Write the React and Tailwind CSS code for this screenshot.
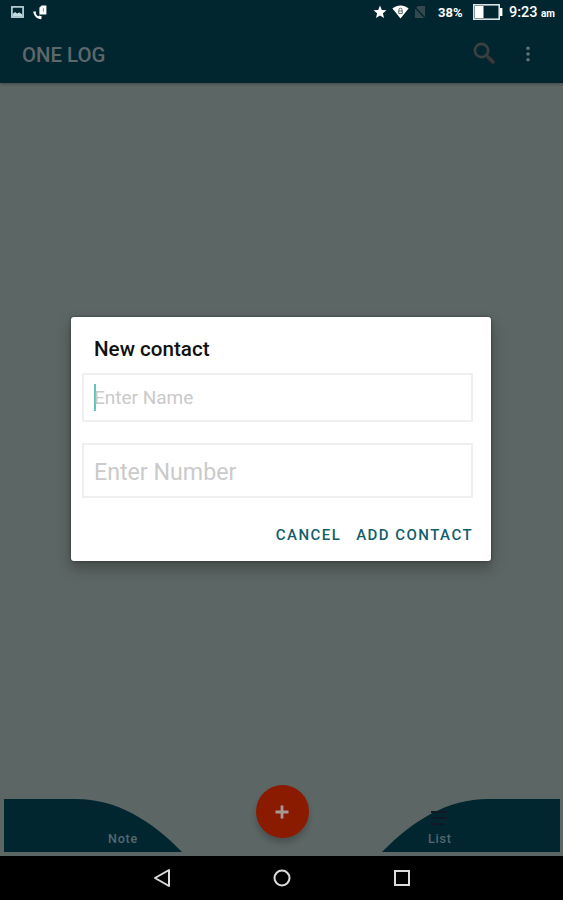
import React, { useState } from 'react';

function StatusBar() {
    return (
        <div className="flex h-6 items-center justify-between pl-[11px] pr-[7px] text-white">
            <div className="flex items-center gap-[9px]">
                <svg width="13" height="12" viewBox="0 0 13 12" fill="none" className="text-[#c3dce2]">
                    <rect x="0.9" y="0.9" width="11.2" height="10.2" stroke="currentColor" strokeWidth="1.6" />
                    <path d="M1.6 10.4V8l2.4-2 2 1.6L8.4 6.4l3 2v2z" fill="currentColor" />
                </svg>
                <svg width="15" height="15" viewBox="0 0 15 15" fill="none">
                    <path d="M8.6 0.5H13.4v9H6.4V2.8z" fill="currentColor" />
                    <path d="M10.4 3.2v3.6" stroke="#8aa2a8" strokeWidth="1.2" />
                    <path d="M0.2 6.4c0.6 4.4 3.8 7.6 8 7.8l0.6-2.6-2.3-1.2-1.4 0.8C3.9 10.4 3.4 9.6 2.8 8.2L3 6.6z" fill="currentColor" />
                </svg>
            </div>
            <div className="flex items-center">
                <svg width="14" height="14" viewBox="0 0 14 14" fill="currentColor">
                    <path d="M7 0.6l1.8 4.3 4.7 0.4-3.6 3 1.1 4.6L7 10.4l-4 2.5 1.1-4.6-3.6-3 4.7-0.4z" />
                </svg>
                <svg width="17" height="14" viewBox="0 0 17 14" className="ml-[5px]">
                    <path d="M0.4 3.6C5-0.4 12-0.4 16.6 3.6L8.5 13.6z" fill="currentColor" />
                    <path d="M6.9 6V4.8a1.6 1.6 0 0 1 3.2 0V6M6.8 6h3.4v2.6H6.8z" fill="none" stroke="#52686e" strokeWidth="1" />
                </svg>
                <svg width="12" height="14" viewBox="0 0 12 14" className="ml-[5px]">
                    <path d="M4 1h7v12H1V4z" fill="#33494f" />
                    <path d="M0.5 2l10.5 11" stroke="#02262f" strokeWidth="1.4" />
                </svg>
                <span className="ml-[12px] w-[25px] pt-[1px] text-[13px] font-bold leading-none">38%</span>
                <svg width="30" height="16" viewBox="0 0 30 16" fill="none" className="ml-[10px]">
                    <rect x="0.8" y="0.8" width="25.4" height="14.4" stroke="#dbe3e5" strokeWidth="1.6" />
                    <rect x="2" y="2" width="8.5" height="12" fill="currentColor" />
                    <rect x="27" y="4" width="2.4" height="8" fill="currentColor" />
                </svg>
                <span className="ml-[6px] w-[30px] whitespace-nowrap pt-[2px] text-[14.5px] font-medium leading-none">9:23</span>
                <span className="ml-[2px] mt-[4px] w-[15px] text-[10px] font-bold leading-none">am</span>
            </div>
        </div>
    );
}

function AppBar() {
    return (
        <div className="flex h-[59px] items-center justify-between pl-[22px] pr-[31px]">
            <h1 className="pt-[4px] text-[20.4px] font-medium leading-none text-[#5d686b]">ONE LOG</h1>
            <div className="flex items-center gap-[28px]">
                <svg width="23" height="23" viewBox="0 0 23 23" fill="none">
                    <circle cx="8.5" cy="8.5" r="6.6" stroke="#394142" strokeWidth="2.6" />
                    <path d="M13.2 13.2l2 2" stroke="#394142" strokeWidth="2" />
                    <path d="M15 15l5 5" stroke="#3d3739" strokeWidth="3.6" strokeLinecap="round" />
                </svg>
                <svg width="8" height="18" viewBox="0 0 8 18" fill="#617175">
                    <circle cx="4" cy="3.2" r="1.8" />
                    <circle cx="4" cy="9" r="1.8" />
                    <circle cx="4" cy="14.8" r="1.8" />
                </svg>
            </div>
        </div>
    );
}

function ContactDialog() {
    const [name, setName] = useState('');
    const [number, setNumber] = useState('');

    return (
        <div className="h-[244px] w-[420px] rounded-[3px] bg-white pl-[11px] pr-[18px] pt-[20px] shadow-[0_7px_14px_1px_rgba(0,0,0,0.25),0_0_3px_rgba(0,0,0,0.4)]">
            <h2 className="pl-[12px] text-[20.6px] font-medium leading-6 text-[#111]">New contact</h2>

            <div className="mt-[12px] flex h-[49px] items-center border-2 border-[#efefef] pl-[10px]">
                {/* Text cursor */}
                <span className="-mr-[2px] h-[27px] w-[2px] shrink-0 bg-[#62c5b9]" />
                <input
                    type="text"
                    className="w-full bg-transparent pt-[1px] text-[19px] text-black outline-none placeholder:text-[#cacaca]"
                    placeholder="Enter Name"
                    value={name}
                    onChange={e => setName(e.target.value)}
                />
            </div>

            <div className="mt-[21px] flex h-[55px] items-center border-2 border-[#efefef] pl-[10px]">
                <input
                    type="text"
                    className="w-full bg-transparent pt-[3px] text-[23.2px] text-black outline-none placeholder:text-[#cacaca]"
                    placeholder="Enter Number"
                    value={number}
                    onChange={e => setNumber(e.target.value)}
                />
            </div>

            <div className="mt-[27px] flex justify-end gap-[15px] text-[15px] font-medium leading-5 tracking-[1.45px] text-[#125e6b]">
                <button>CANCEL</button>
                <button>ADD CONTACT</button>
            </div>
        </div>
    );
}

function BottomTabs() {
    return (
        <div className="flex h-[74px] items-end justify-between pb-[4px] pl-[4px] pr-[3px] text-[12.5px] font-medium leading-none tracking-[0.8px] text-[#536970]">
            <div className="relative h-[53px] w-[178px]">
                <svg width="178" height="53" viewBox="0 0 178 53" className="absolute inset-0" fill="#02262f">
                    <path d="M0 0H72C112 0 147 21 178 53H0z" />
                </svg>
                <span className="absolute left-[104px] top-[34px]">Note</span>
            </div>

            {/* Add button */}
            <div className="mb-[14px] flex h-[53px] w-[53px] items-center justify-center rounded-full bg-[#8a1b00] shadow-[0_5px_6px_rgba(0,0,0,0.2)]">
                <svg width="14" height="14" viewBox="0 0 14 14" stroke="#a59a94" strokeWidth="2.8">
                    <path d="M7 0.5v13M0.5 7h13" />
                </svg>
            </div>

            <div className="relative h-[53px] w-[178px]">
                <svg width="178" height="53" viewBox="0 0 178 53" className="absolute inset-0">
                    <path d="M178 0H106C66 0 31 21 0 53H178z" fill="#02262f" />
                    <path d="M49 13h16M49 19h16M49 25h13" stroke="#0e1926" strokeWidth="2" />
                </svg>
                <span className="absolute left-[46px] top-[34px]">List</span>
            </div>
        </div>
    );
}

function NavBar() {
    return (
        <div className="flex h-[44px] items-center justify-center gap-[102px] bg-black">
            <svg width="18" height="20" viewBox="0 0 18 20" fill="none" stroke="#dcdcdc" strokeWidth="2">
                <path d="M16 2v16L2 10z" strokeLinejoin="round" />
            </svg>
            <svg width="18" height="18" viewBox="0 0 18 18" fill="none" stroke="#dcdcdc" strokeWidth="2">
                <circle cx="9" cy="9" r="7.5" />
            </svg>
            <svg width="18" height="18" viewBox="0 0 18 18" fill="none" stroke="#dcdcdc" strokeWidth="2">
                <rect x="2" y="2" width="14" height="14" />
            </svg>
        </div>
    );
}

export default function App() {
    return (
        <div className="flex h-[900px] w-[563px] flex-col overflow-hidden bg-[#5c6664] font-[Roboto,sans-serif]">
            <header className="h-[83px] shrink-0 bg-[#02262f] shadow-[0_1px_3px_rgba(0,0,0,0.3)]">
                <StatusBar />
                <AppBar />
            </header>
            <main className="flex flex-1 flex-col">
                <div className="flex flex-1 justify-center pr-[1px] pt-[234px]">
                    <ContactDialog />
                </div>
                <BottomTabs />
            </main>
            <NavBar />
        </div>
    );
}
